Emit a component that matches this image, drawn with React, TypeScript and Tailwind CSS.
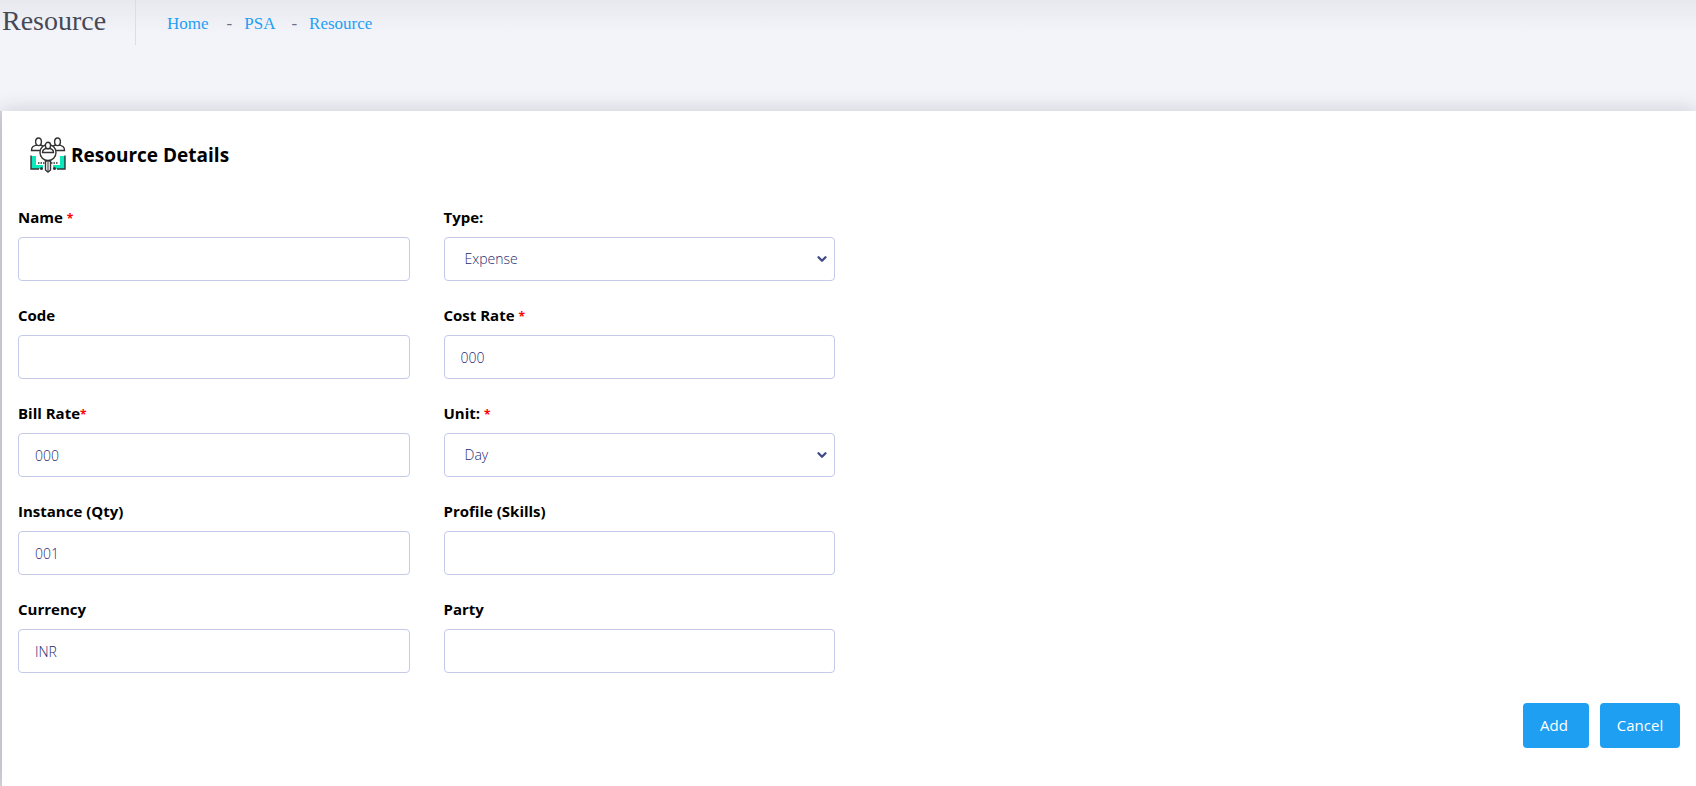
import { FiChevronDown } from 'react-icons/fi';

interface FieldConfig {
  id: string;
  label: string;
  required?: boolean;
  tightMark?: boolean;
  value?: string;
  options?: string[];
}

const FIELDS: FieldConfig[] = [
  { id: 'name', label: 'Name', required: true },
  { id: 'type', label: 'Type:', options: ['Expense', 'Labour', 'Material'] },
  { id: 'code', label: 'Code' },
  { id: 'costRate', label: 'Cost Rate', required: true, value: '000' },
  { id: 'billRate', label: 'Bill Rate', required: true, tightMark: true, value: '000' },
  { id: 'unit', label: 'Unit:', required: true, options: ['Day', 'Hour', 'Month'] },
  { id: 'instance', label: 'Instance (Qty)', value: '001' },
  { id: 'profile', label: 'Profile (Skills)' },
  { id: 'currency', label: 'Currency', value: 'INR' },
  { id: 'party', label: 'Party' },
];

const ResourceIcon = () => (
  <svg
    width="36"
    height="36"
    viewBox="0 0 36 36"
    fill="none"
    stroke="#333"
    strokeWidth="1.4"
    aria-hidden="true"
  >
    <path d="M1 19h5v9h7v4H1z" fill="#0fe8bd" stroke="none" />
    <path d="M35 19h-5v9h-7v4h12z" fill="#0fe8bd" stroke="none" />
    <path d="M1 18.500v13.500h8M35 18.500v13.500h-8" />
    <path d="M8 26h7M21 26h7" strokeDasharray="1.500 1" />
    <g fill="#fff">
      <path d="M1.500 13.500c0-4 2-4.500 5-5.500h4c3 1 4.500 1.500 4.500 5.500z" />
      <path d="M34.500 13.500c0-4-2-4.500-5-5.500h-4c-3 1-4.500 1.500-4.500 5.500z" />
      <ellipse cx="8.500" cy="4.800" rx="2.900" ry="3.800" />
      <ellipse cx="27.500" cy="4.800" rx="2.900" ry="3.800" />
      <circle cx="18" cy="15.500" r="8" />
      <path d="M15.500 24h5v9l-2.500 2-2.500-2z" />
      <path d="M12.500 15.500c0-3 1.500-3.500 3.500-4h4c2 .5 3.500 1 3.500 4z" />
      <ellipse cx="18" cy="8.500" rx="2.600" ry="3.300" />
    </g>
    <path d="M18 25v9" strokeWidth="1" />
    <g fill="#333" stroke="none">
      <circle cx="11.500" cy="31.500" r="1.500" />
      <circle cx="24.500" cy="31.500" r="1.500" />
    </g>
  </svg>
);

const controlClass =
  'h-11 w-full rounded border border-[#c5cae9] bg-white text-sm font-light text-[#1f2a70] outline-none focus:border-[#1e9ff2]';

const Field = ({ field }: { field: FieldConfig }) => (
  <div className="flex flex-col gap-2">
    <label htmlFor={field.id} className="text-[15px] leading-6 font-bold text-black">
      {field.label}
      {field.required && (
        <span className={field.tightMark ? 'text-xs text-[#f00]' : 'ml-1 text-xs text-[#f00]'}>
          *
        </span>
      )}
    </label>
    {field.options ? (
      <div className="relative">
        <select id={field.id} className={`${controlClass} appearance-none px-5`}>
          {field.options.map((option) => (
            <option key={option}>{option}</option>
          ))}
        </select>
        <FiChevronDown
          className="pointer-events-none absolute top-1/2 right-1.5 -translate-y-1/2 text-[#3f4a87]"
          size={14}
          strokeWidth={4}
        />
      </div>
    ) : (
      <input
        id={field.id}
        type="text"
        defaultValue={field.value}
        className={`${controlClass} px-4`}
      />
    )}
  </div>
);

const App = () => (
  <div className="flex min-h-screen flex-col bg-[#d6d6dd] font-['Open_Sans','Noto_Sans',sans-serif]">
    <header className="flex h-[111px] items-start bg-linear-to-b from-[#e8e9ef] to-[#f3f4fa] to-30% font-['Liberation_Serif',serif]">
      <h1 className="h-[45px] w-[136px] border-r border-[#dcdde3] pl-0.5 text-[28px] leading-[42px] text-[#464855]">
        Resource
      </h1>
      <nav aria-label="Breadcrumb" className="pl-[31px] text-[17px] leading-12 text-[#6b6f82]">
        <ol className="flex">
          <li>
            <a href="#home" className="text-[#1e9ff2]">Home</a>
          </li>
          <li className="flex">
            <span className="pr-3 pl-[18px]">-</span>
            <a href="#psa" className="text-[#1e9ff2]">PSA</a>
          </li>
          <li className="flex">
            <span className="pr-3 pl-4">-</span>
            <a href="#resource" className="text-[#1e9ff2]">Resource</a>
          </li>
        </ol>
      </nav>
    </header>

    <main className="ml-0.5 grow bg-white pt-[25px] pr-2.5 pb-9 pl-4 shadow-[0_0_20px_rgba(40,40,50,0.2)]">
      <h2 className="flex items-center gap-[5px] pl-3 text-[19px] leading-[38px] font-bold text-black">
        <ResourceIcon />
        Resource Details
      </h2>
      <form>
        <div className="mt-[31px] grid grid-cols-4 gap-x-[34px]">
          <div className="col-span-2 grid grid-cols-2 gap-x-[34px] gap-y-[22px]">
            {FIELDS.map((field) => (
              <Field key={field.id} field={field} />
            ))}
          </div>
        </div>
        <div className="mt-[30px] flex justify-end gap-[11px] pr-1.5">
          <button type="button" className="h-[45px] w-[66px] rounded bg-[#1e9ff2] pr-1 text-[15px] text-white">
            Add
          </button>
          <button type="button" className="h-[45px] w-20 rounded bg-[#1e9ff2] text-[15px] text-white">
            Cancel
          </button>
        </div>
      </form>
    </main>
  </div>
);

export default App;
